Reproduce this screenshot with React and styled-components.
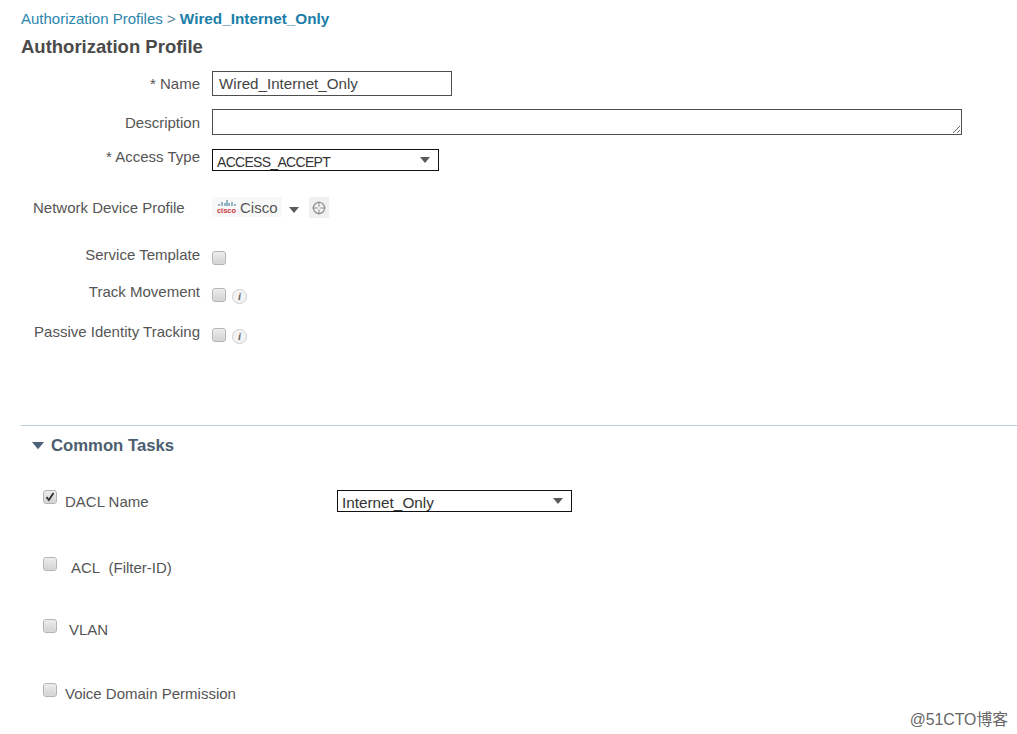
import React from "react";
import styled, { createGlobalStyle } from "styled-components";

const GlobalStyle = createGlobalStyle`
  html, body { margin: 0; padding: 0; background: #fff; }
  body { font-family: "Liberation Sans", Arial, sans-serif; color: #444; overflow: hidden; }
`;

const Caret = ({ size = 10, color = "#5a5a5a" }) => (
  <svg width={size} height={size * 0.6} viewBox="0 0 10 6" aria-hidden="true">
    <path d="M0 0h10L5 6z" fill={color} />
  </svg>
);

const App = () => (
  <Page>
    <GlobalStyle />
    <Breadcrumb>
      Authorization Profiles <Sep>&gt;</Sep> <strong>Wired_Internet_Only</strong>
    </Breadcrumb>
    <Title>Authorization Profile</Title>

    <Row $height={25} $top={13}>
      <Label>* Name</Label>
      <TextInput readOnly value="Wired_Internet_Only" />
    </Row>
    <Row $height={26} $top={13}>
      <Label>Description</Label>
      <Description readOnly />
    </Row>
    <Row $height={22} $top={14}>
      <Label $shift={-4}>* Access Type</Label>
      <Select $width={227} $tight>
        ACCESS_ACCEPT
        <Caret />
      </Select>
    </Row>

    <DeviceRow>
      <DeviceLabel>Network Device Profile</DeviceLabel>
      <CiscoBox>
        <CiscoLogo>
          <svg width="18" height="7" viewBox="0 0 18 7" aria-hidden="true">
            <path
              d="M1 4v2M4 2v4M7 3v3M9 0v6M11 3v3M14 2v4M17 4v2"
              stroke="#2f6f94"
              strokeWidth="1"
            />
          </svg>
          <CiscoWord>cisco</CiscoWord>
        </CiscoLogo>
        Cisco
      </CiscoBox>
      <DeviceCaret>
        <Caret size={10} />
      </DeviceCaret>
      <TargetBox>
        <svg width="14" height="14" viewBox="0 0 14 14" aria-hidden="true">
          <circle cx="7" cy="7" r="5.6" fill="none" stroke="#8f8f8f" strokeWidth="1.2" />
          <path d="M7 0.5v13M0.5 7h13" stroke="#8f8f8f" strokeWidth="1" />
          <circle cx="7" cy="7" r="1.5" fill="#eee" />
        </svg>
      </TargetBox>
    </DeviceRow>

    <Row $height={20} $top={27}>
      <Label $shift={-1}>Service Template</Label>
      <Check $drop={3} />
    </Row>
    <Row $height={20} $top={17}>
      <Label $shift={-1}>Track Movement</Label>
      <Check $drop={3} />
      <Info>i</Info>
    </Row>
    <Row $height={20} $top={20}>
      <Label $shift={-1}>Passive Identity Tracking</Label>
      <Check $drop={3} />
      <Info>i</Info>
    </Row>

    <Divider />
    <SectionHead>
      <Caret size={12} color="#4b6178" />
      Common Tasks
    </SectionHead>

    <TaskRow $top={34}>
      <Check $checked>
        <svg width="12" height="12" viewBox="0 0 12 12" aria-hidden="true">
          <path d="M2.5 6.2l2.4 2.8 4.6-7" fill="none" stroke="#333" strokeWidth="1.9" />
        </svg>
      </Check>
      <TaskName $gap={8}>DACL Name</TaskName>
      <Select $width={235} $left={337}>
        Internet_Only
        <Caret />
      </Select>
    </TaskRow>
    <TaskRow $top={44}>
      <Check $drop={1} />
      <TaskName $gap={14}>ACL&nbsp; (Filter-ID)</TaskName>
    </TaskRow>
    <TaskRow $top={40}>
      <Check $drop={1} />
      <TaskName $gap={12}>VLAN</TaskName>
    </TaskRow>
    <TaskRow $top={42}>
      <Check $drop={1} />
      <TaskName $gap={8}>Voice Domain Permission</TaskName>
    </TaskRow>

    <Watermark>@51CTO博客</Watermark>
  </Page>
);

export default App;

const Page = styled.div`
  position: relative;
  width: 1017px;
  height: 734px;
  overflow: hidden;
  padding-top: 10px;
  box-sizing: border-box;
  font-size: 15px;
`;

const Breadcrumb = styled.div`
  margin-left: 21px;
  height: 17px;
  line-height: 17px;
  font-size: 15px;
  color: #2b86ad;

  strong {
    font-size: 15.3px;
    color: #1a7ea8;
  }
`;

const Sep = styled.span`
  color: #5a7f92;
`;

const Title = styled.h1`
  margin: 9px 0 0 21px;
  height: 22px;
  line-height: 22px;
  font-size: 18.5px;
  font-weight: 700;
  color: #4a4a4a;
`;

const Row = styled.div`
  display: flex;
  align-items: center;
  height: ${(p) => p.$height}px;
  margin-top: ${(p) => p.$top}px;
`;

const Label = styled.label`
  flex: 0 0 200px;
  margin-right: 12px;
  text-align: right;
  color: #555;
  transform: translateY(${(p) => p.$shift || 0}px);
`;

const TextInput = styled.input`
  width: 240px;
  height: 25px;
  box-sizing: border-box;
  padding: 0 6px;
  border: 1px solid #4f4f4f;
  outline: none;
  font: 15.15px "Liberation Sans", Arial, sans-serif;
  color: #444;
`;

const Description = styled.textarea`
  display: block;
  width: 750px;
  height: 26px;
  box-sizing: border-box;
  margin: 0;
  padding: 0 6px;
  border: 1px solid #4f4f4f;
  outline: none;
  resize: both;
`;

const Select = styled.div`
  display: flex;
  align-items: center;
  justify-content: space-between;
  width: ${(p) => p.$width}px;
  height: 22px;
  box-sizing: border-box;
  padding: 3px 8px 0 4px;
  border: 1px solid #111;
  color: #333;
  font-size: ${(p) => (p.$tight ? "14px" : "15.3px")};
  letter-spacing: ${(p) => (p.$tight ? "-0.7px" : "0")};
  ${(p) => (p.$left ? `position: absolute; left: ${p.$left}px;` : "")}

  svg {
    margin-top: -3px;
  }
`;

const DeviceRow = styled.div`
  display: flex;
  align-items: center;
  height: 22px;
  margin-top: 25px;
`;

const DeviceLabel = styled.span`
  width: 179px;
  margin-left: 33px;
  color: #555;
`;

const CiscoBox = styled.div`
  display: flex;
  align-items: center;
  gap: 4px;
  height: 20px;
  padding: 0 4px 0 5px;
  background: #f8f8f8;
  color: #555;
`;

const CiscoLogo = styled.div`
  display: flex;
  flex-direction: column;
  align-items: center;
  width: 19px;
`;

const CiscoWord = styled.span`
  font-size: 7.5px;
  line-height: 7px;
  font-weight: 700;
  color: #c8363a;
`;

const DeviceCaret = styled.span`
  display: flex;
  margin: 6px 0 0 7px;
`;

const TargetBox = styled.div`
  display: flex;
  align-items: center;
  justify-content: center;
  width: 20px;
  height: 21px;
  margin: 1px 0 0 10px;
  background: #f0f0f0;
`;

const Check = styled.span`
  display: inline-flex;
  align-items: center;
  justify-content: center;
  flex: none;
  width: 14px;
  height: 14px;
  box-sizing: border-box;
  border: 1px solid #b4b4b4;
  border-radius: 3px;
  background: linear-gradient(#ededed, #d2d2d2);
  box-shadow: inset 0 0 1px #fff;
  transform: translateY(${(p) => p.$drop || 0}px);
`;

const Info = styled.span`
  display: inline-flex;
  align-items: center;
  justify-content: center;
  width: 15px;
  height: 15px;
  box-sizing: border-box;
  margin: 8px 0 0 6px;
  border: 1px solid #cfcfcf;
  border-radius: 50%;
  background: #f4f4f4;
  font: italic 700 11px "Liberation Serif", serif;
  color: #666;
`;

const Divider = styled.hr`
  height: 1px;
  margin: 83px 0 0 21px;
  border: 0;
  background: #b5d0de;
`;

const SectionHead = styled.h2`
  display: flex;
  align-items: center;
  gap: 7px;
  height: 20px;
  margin: 10px 0 0 32px;
  font-size: 16.7px;
  font-weight: 700;
  color: #4b5d70;
`;

const TaskRow = styled.div`
  display: flex;
  align-items: flex-start;
  height: 22px;
  margin: ${(p) => p.$top}px 0 0 43px;
`;

const TaskName = styled.span`
  margin: 3px 0 0 ${(p) => p.$gap}px;
  color: #555;
`;

const Watermark = styled.div`
  position: absolute;
  right: 9px;
  top: 707px;
  font-size: 15.8px;
  font-family: "Liberation Sans", "Noto Sans CJK SC", sans-serif;
  color: #666;
`;
